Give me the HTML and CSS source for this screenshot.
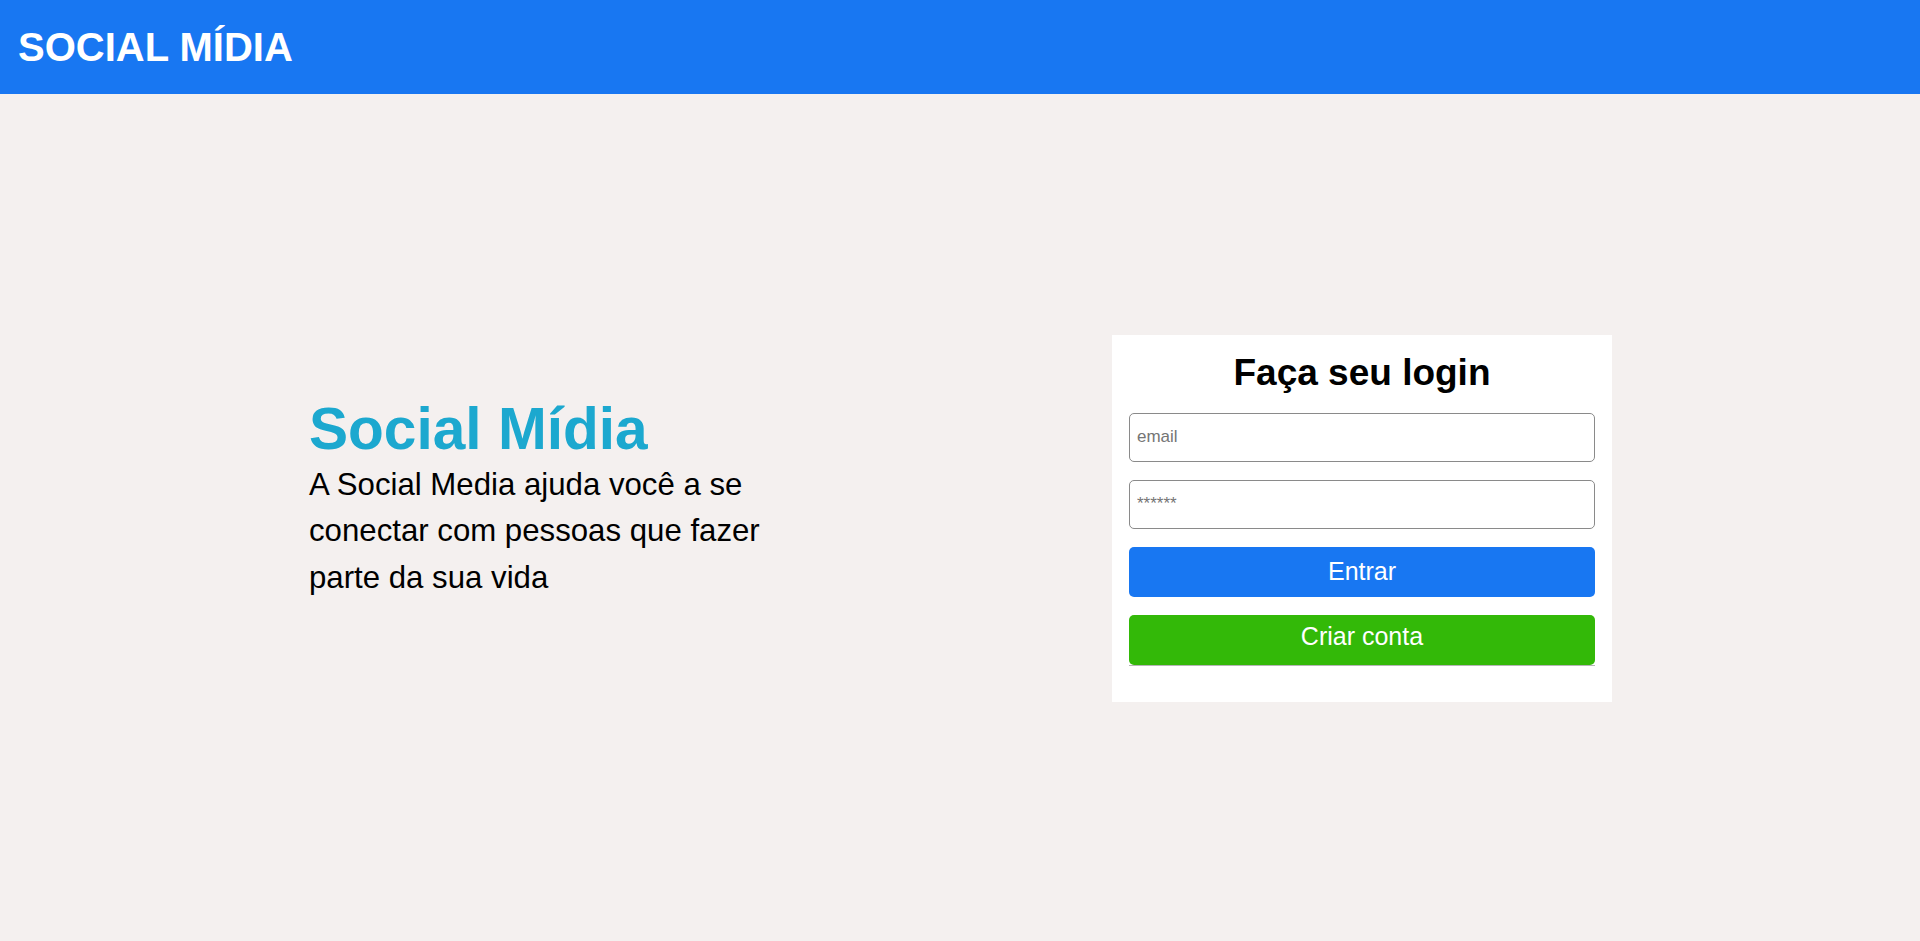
FILE: index.html
```html
<!DOCTYPE html>
<html lang="pt-BR">
<head>
<meta charset="utf-8">
<title>Social Mídia</title>
<link rel="stylesheet" href="styles.css">
</head>
<body>
<header class="topbar">
  <h1 class="brand">SOCIAL MÍDIA</h1>
</header>
<main class="main">
  <section class="intro">
    <h2 class="intro-title">Social Mídia</h2>
    <p class="intro-text">A Social Media ajuda você a se conectar com pessoas que fazer parte da sua vida</p>
  </section>
  <form class="card">
    <h2 class="card-title">Faça seu login</h2>
    <input class="field" type="email" placeholder="email">
    <input class="field" type="password" placeholder="******">
    <button class="btn btn-login" type="button">Entrar</button>
    <div class="create-wrap">
      <button class="btn btn-create" type="button">Criar conta</button>
    </div>
  </form>
</main>
</body>
</html>
```
FILE: styles.css
```css
* { box-sizing: border-box; }
html, body { margin: 0; padding: 0; }
body {
  font-family: "Liberation Sans", Arial, sans-serif;
  background: #f4f0ef;
  min-height: 100vh;
  display: flex;
  flex-direction: column;
}
.topbar {
  height: 94px;
  background: #1877f2;
  display: flex;
  align-items: center;
  padding-left: 18px;
  flex-shrink: 0;
}
.brand {
  margin: 0;
  font-size: 40px;
  font-weight: bold;
  color: #fff;
  line-height: normal;
}
.main {
  flex: 1;
  display: flex;
  justify-content: space-evenly;
  align-items: center;
  padding: 1px 2px 0 0;
}
.intro {
  width: 500px;
  padding: 0 0 40px 3px;
}
.intro-title {
  margin: 0;
  font-size: 58.6px;
  font-weight: bold;
  color: #1ca8cf;
  line-height: normal;
}
.intro-text {
  margin: 0;
  font-size: 31.2px;
  line-height: 1.49;
  color: #000;
}
.card {
  width: 500px;
  background: #fff;
  padding: 17px 17px 36px;
  display: flex;
  flex-direction: column;
  gap: 18px;
}
.card-title {
  margin: 0 0 1px;
  text-align: center;
  font-size: 37px;
  font-weight: bold;
  color: #000;
  line-height: normal;
}
.field {
  width: 100%;
  height: 49px;
  border: 1px solid #8a8a8a;
  border-radius: 5px;
  padding: 0 7px;
  font-family: "Liberation Sans", Arial, sans-serif;
  font-size: 17px;
  background: #fff;
}
.field::placeholder { color: #757575; }
.btn {
  width: 100%;
  border: none;
  border-radius: 5px;
  color: #fff;
  font-family: "Liberation Sans", Arial, sans-serif;
  font-size: 25px;
  line-height: normal;
  cursor: pointer;
}
.btn-login {
  height: 50px;
  background: #1877f2;
  padding: 0;
}
.create-wrap {
  border-bottom: 1px solid #b5b5b5;
  display: flex;
}
.btn-create {
  background: #33b908;
  padding: 7px 0 14px;
  height: 50px;
  display: flex;
  justify-content: center;
  align-items: flex-start;
}
```
